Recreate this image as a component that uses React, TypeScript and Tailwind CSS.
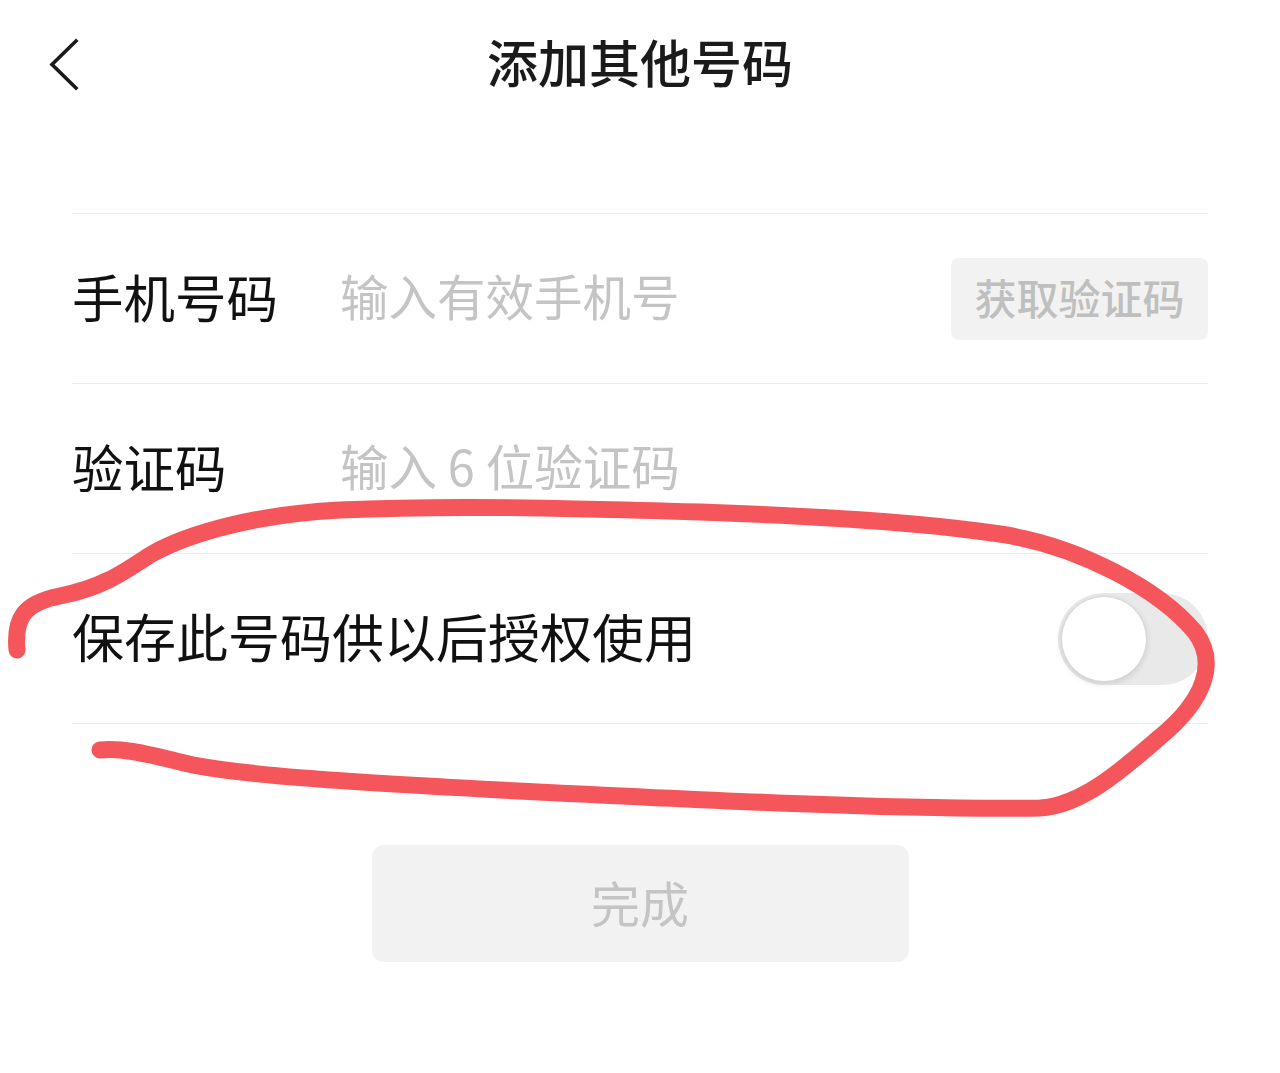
import React from 'react';

const font = { fontFamily: '"Noto Sans CJK SC", "Noto Sans", sans-serif' };

const BackIcon: React.FC = () => (
  <svg width="34" height="56" viewBox="0 0 34 56" fill="none">
    <path d="M29 4 L5 27.5 L29 51" stroke="#1a1a1a" strokeWidth="3.6" strokeLinecap="square" strokeLinejoin="miter" />
  </svg>
);

const App: React.FC = () => {
  return (
    <div className="relative w-[1280px] h-[1073px] bg-white overflow-hidden" style={font}>
      {/* Header */}
      <div className="grid grid-cols-[1fr_auto_1fr] items-center h-[130px] px-[47px]">
        <div className="flex items-center">
          <BackIcon />
        </div>
        <h1 className="mb-[8px] text-[51px] leading-none font-medium text-[#1a1a1a]">添加其他号码</h1>
        <div />
      </div>

      {/* Form */}
      <div className="mx-[72px] mt-[83px] border-t border-[#ececec]">
        <div className="flex items-center h-[170px] border-b border-[#ececec]">
          <span className="w-[268px] mb-[6px] text-[51.5px] leading-none text-[#111]">手机号码</span>
          <span className="flex-1 mb-[6px] text-[48.5px] leading-none text-[#c4c4c4]">输入有效手机号</span>
          <button className="flex items-center justify-center w-[257px] h-[82px] rounded-[8px] bg-[#f2f2f2] text-[42px] leading-none font-medium text-[#bfbfbf]">
            <span className="mb-[4px]">获取验证码</span>
          </button>
        </div>
        <div className="flex items-center h-[170px] border-b border-[#ececec]">
          <span className="w-[268px] mb-[6px] text-[51.5px] leading-none text-[#111]">验证码</span>
          <span className="flex-1 mb-[6px] text-[48.5px] leading-none text-[#c4c4c4]">输入 6 位验证码</span>
        </div>
        <div className="flex items-center justify-between h-[170px] border-b border-[#ececec]">
          <span className="mb-[6px] text-[52px] leading-none text-[#111]">保存此号码供以后授权使用</span>
          <div className="flex items-center w-[150px] h-[92px] rounded-full bg-[#e9e9e9] p-[3px]">
            <div className="w-[86px] h-[86px] rounded-full bg-white border border-[#d8d8d8] shadow-[0_2px_6px_rgba(0,0,0,0.12)]" />
          </div>
        </div>
      </div>

      {/* Submit */}
      <div className="flex justify-center mt-[121px]">
        <button className="flex items-center justify-center w-[537px] h-[117px] rounded-[12px] bg-[#f2f2f2] text-[49px] leading-none text-[#c4c4c4]">
          <span className="mb-[4px]">完成</span>
        </button>
      </div>

      {/* Hand-drawn red annotation */}
      <svg className="absolute inset-0 pointer-events-none" width="1280" height="1073" viewBox="0 0 1280 1073" fill="none">
        <path
          d="M17 650 C14 618 24 603 60 596 C100 588 120 575 150 555 C190 532 260 514 340 510 C450 505 560 508 700 512 C820 516 920 522 1000 534 C1080 546 1160 590 1195 632 C1218 662 1205 700 1160 737 C1120 772 1080 806 1040 808 C900 810 700 800 500 790 C350 782 230 775 180 762 C140 752 120 748 100 750"
          stroke="#f4565b"
          strokeWidth="17"
          strokeLinecap="round"
          strokeLinejoin="round"
        />
      </svg>
    </div>
  );
};

export default App;
